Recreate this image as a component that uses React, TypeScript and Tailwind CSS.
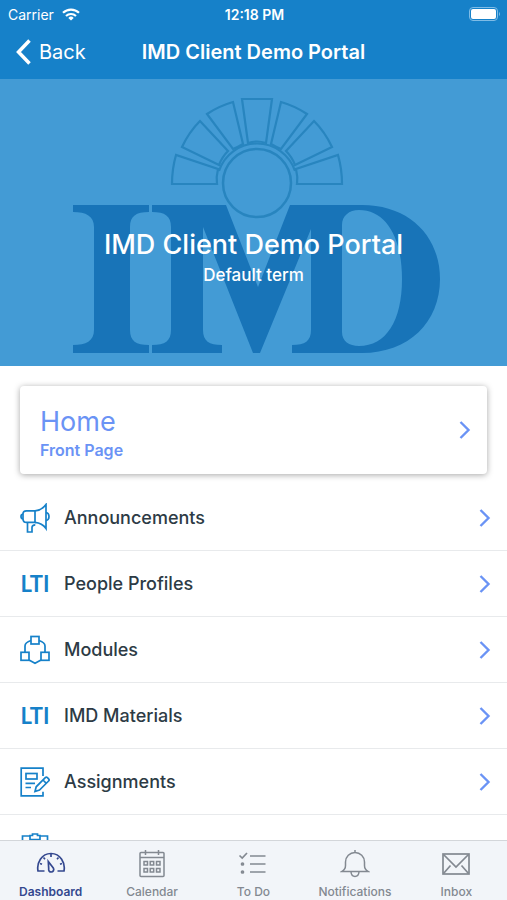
import React from 'react';

interface CourseItem {
  label: string;
  icon: React.ReactNode;
}

interface TabItem {
  label: string;
  icon: React.ReactNode;
  active?: boolean;
}

const iconProps = {
  width: 30,
  height: 30,
  viewBox: '0 0 30 30',
  fill: 'none',
  stroke: 'currentColor',
  strokeWidth: 1.7,
  'aria-hidden': true,
};

const MegaphoneIcon = () => (
  <svg {...iconProps}>
    <path d="M15 7.8H6.5C4.2 7.8 3 9.2 3 11v5c0 2 1.2 3.4 3.5 3.4H15z" />
    <path d="M3 11c-1.400.3-2 1.300-2 2.500s.6 2.200 2 2.500" />
    <path d="M15 7.800c5-.4 8.500-2.800 11-6.300v24c-2.500-3.500-6-5.700-11-6.100" />
    <path d="M26 9.500c2 .3 3 2 3 4s-1 3.700-3 4" />
    <path d="M7.500 19.400V29H12v-4.500c0-1.800 1.200-2.700 3.300-2.700" />
  </svg>
);

const ModulesIcon = () => (
  <svg {...iconProps}>
    <rect x="11" y="1.500" width="8" height="7.500" />
    <rect x="1" y="17.300" width="8" height="8" />
    <rect x="21" y="17.300" width="8" height="8" />
    <path d="M11 5.500C8 6.500 5 8.500 5 11v6M19 5.500c3 1 6 3 6 5.500v6M9 25l6 3.200 6-3.200" />
  </svg>
);

const AssignmentIcon = () => (
  <svg {...iconProps}>
    <path d="M23 9V1.200H1.200v27.600H23v-4" />
    <rect x="6" y="6.500" width="11" height="5.500" />
    <path d="M5.500 16.300H15M5.500 20.500H11" />
    <path d="M15 24.500l1.200-4.700L25.300 10.700a1.500 1.500 0 0 1 2.100 0l1.200 1.200a1.500 1.500 0 0 1 0 2.100L19.500 23zM23 13l3.300 3.300" />
  </svg>
);

const ClipboardIcon = () => (
  <svg {...iconProps}>
    <path d="M10 3H2.500v26h25V3H20" />
    <path d="M10 6.500v-4h2.500V1h5v1.500H20v4z" />
  </svg>
);

const LtiIcon = () => (
  <span className="font-[Lato,sans-serif] text-[22px] leading-7 font-bold">LTI</span>
);

const DashboardIcon = () => (
  <svg {...iconProps}>
    <path d="M8.500 22H2C.5 14 5.500 4.500 15 4.500S29.500 14 28 22h-6.500" />
    <path d="M12.300 12.500l5 6.500c1.200 2-.2 4-2 4s-3-1.200-2.600-3.500z" />
    <path d="M15 5v3M7.500 8.500l1.500 1.700M22.500 8.500L21 10.200M4 14.500l2 .8M26 14.500l-2 .8" />
  </svg>
);

const CalendarIcon = () => (
  <svg {...iconProps} strokeWidth={1.5}>
    <rect x="3" y="3.500" width="24" height="24" rx="1" />
    <path d="M3 8.500h24M8.500 1v5M21.500 1v5" />
    <path d="M7 12.500h3.500V16H7zM13.200 12.500h3.500V16h-3.500zM19.500 12.500H23V16h-3.500zM7 19.500h3.500V23H7zM13.200 19.500h3.500V23h-3.500zM19.500 19.500H23V23h-3.500z" />
  </svg>
);

const TodoIcon = () => (
  <svg {...iconProps}>
    <path d="M12 7h15.500M12 15h15.500M12 23h15.500" />
    <path d="M1.500 6.500L4.200 9 9 4" />
    <circle cx="4.500" cy="15" r="1" />
    <circle cx="4.500" cy="23" r="1" />
  </svg>
);

const BellIcon = () => (
  <svg {...iconProps} strokeWidth={1.5}>
    <path d="M2 22.500h26c-2.500-1.500-3.500-3-3.500-6V13a9.500 9.500 0 0 0-19 0v3.500c0 3-1 4.500-3.500 6zM15 3.500V1M11 23c.3 2.800 1.800 4.500 4 4.500s3.700-1.700 4-4.500" />
  </svg>
);

const MailIcon = () => (
  <svg {...iconProps}>
    <rect x="2" y="5" width="26" height="20" />
    <path d="M2.500 5.500L15 18 27.500 5.500M2.500 24.500l7-8M27.500 24.500l-7-8" />
  </svg>
);

const Chevron = () => (
  <svg width="12" height="20" viewBox="0 0 12 20" fill="none" stroke="currentColor" strokeWidth="2.400" aria-hidden="true">
    <path d="M1.500 2l8 8-8 8" />
  </svg>
);

const BannerLogo = () => (
  <svg viewBox="0 0 370 260" className="w-[370px]" aria-hidden="true">
    <g fill="#1874b8">
      <path d="M1 110h76v7c-13 0-19 4-19 15v103c0 11 6 15 19 15v8H1v-8c13 0 21-4 21-15V132c0-11-8-15-21-15z" />
      <path d="M80 110h74l32 82 32-82h72c47 0 78 31 78 74s-31 74-78 74h-70v-8c13 0 19-4 19-15V134l-51 124h-7L131 132v103c0 11 6 15 19 15v8H80v-8c13 0 19-4 19-15V132c0-11-6-15-19-15zM270 130v107c0 9 7 14 17 14 27 0 43-25 43-67s-16-69-43-69c-10 0-17 6-17 15z" fillRule="evenodd" />
    </g>
    <circle cx="185" cy="88" r="34" fill="#439bd5" stroke="#2885bf" strokeWidth="2.500" />
    <g fill="none" stroke="#2885bf" strokeWidth="2.200">
      <path d="M100 89Q100 74 104 60L146 74Q144 82 145 89z" />
      <path d="M110 52Q117 37 128 26L156 56Q150 62 147 70z" />
      <path d="M135 19Q147 11 161 7L171 49Q166 52 161 54z" />
      <path d="M170 4h30l-6 44q-9-3-18 0z" />
      <path d="M235 19Q223 11 209 7L199 49Q204 52 209 54z" />
      <path d="M260 52Q253 37 242 26L214 56Q220 62 223 70z" />
      <path d="M270 89Q270 74 266 60L224 74Q226 82 225 89z" />
      <path d="M147 76A40 40 0 0 1 223 76" />
    </g>
  </svg>
);

const courseItems: CourseItem[] = [
  { label: 'Announcements', icon: <MegaphoneIcon /> },
  { label: 'People Profiles', icon: <LtiIcon /> },
  { label: 'Modules', icon: <ModulesIcon /> },
  { label: 'IMD Materials', icon: <LtiIcon /> },
  { label: 'Assignments', icon: <AssignmentIcon /> },
];

const tabs: TabItem[] = [
  { label: 'Dashboard', icon: <DashboardIcon />, active: true },
  { label: 'Calendar', icon: <CalendarIcon /> },
  { label: 'To Do', icon: <TodoIcon /> },
  { label: 'Notifications', icon: <BellIcon /> },
  { label: 'Inbox', icon: <MailIcon /> },
];

const StatusBar = () => (
  <div className="grid grid-cols-[1fr_auto_1fr] items-center h-7 pl-2 pr-1.5 text-[14px]">
    <div className="flex items-center gap-2">
      <span>Carrier</span>
      <svg width="18" height="13" viewBox="0 0 18 13" fill="none" stroke="currentColor" strokeWidth="2.200" aria-hidden="true">
        <path d="M1 4.800a11.500 11.500 0 0 1 16 0M4 8a7.200 7.200 0 0 1 10 0" />
        <path d="M9 12.500L6.300 9.900a3.900 3.900 0 0 1 5.400 0z" fill="currentColor" stroke="none" />
      </svg>
    </div>
    <span className="text-center font-semibold">12:18 PM</span>
    <svg className="justify-self-end" width="32" height="14" viewBox="0 0 32 14" aria-hidden="true">
      <rect x=".5" y=".5" width="28" height="13" rx="3.500" fill="none" stroke="#7fbce6" />
      <rect x="2" y="2" width="25" height="10" rx="2" fill="white" />
      <path d="M30 5v4c1.300-.5 1.300-3.500 0-4z" fill="#7fbce6" />
    </svg>
  </div>
);

const App: React.FC = () => {
  return (
    <div className="flex flex-col h-screen bg-white text-[#2d3b45] font-[Inter,'Liberation_Sans',sans-serif]">
      <header className="shrink-0 bg-[#1681c9] text-white">
        <StatusBar />
        <div className="grid grid-cols-[1fr_auto_1fr] items-center h-[51px] px-4 pb-1">
          <button className="flex items-center gap-2 text-[20px]">
            <svg width="15" height="26" viewBox="0 0 15 26" fill="none" stroke="currentColor" strokeWidth="3.500" aria-hidden="true">
              <path d="M13.500 1.500L2.500 13l11 11.500" />
            </svg>
            Back
          </button>
          <h1 className="text-[20px] font-semibold">IMD Client Demo Portal</h1>
        </div>
      </header>

      <main className="flex-1 min-h-0 overflow-y-auto [scrollbar-width:none]">
        <section className="grid justify-items-center overflow-hidden h-[287px] bg-[#439bd5] text-white">
          <div className="col-start-1 row-start-1 pt-4 pl-1.5">
            <BannerLogo />
          </div>
          <div className="col-start-1 row-start-1 pt-[148px] text-center">
            <h2 className="text-[27px] leading-9 font-medium">IMD Client Demo Portal</h2>
            <p className="text-[17px] leading-6 font-medium">Default term</p>
          </div>
        </section>

        <a
          href="#home"
          className="flex items-center justify-between h-[88px] mx-5 mt-5 mb-[11px] pl-5 pr-4 rounded bg-white text-[#6a93f5] shadow-[0_1px_6px_rgba(0,0,0,0.35)]"
        >
          <span className="flex flex-col pt-2">
            <span className="text-[27px] leading-8">Home</span>
            <span className="text-[16px] leading-6 font-semibold">Front Page</span>
          </span>
          <Chevron />
        </a>

        <nav aria-label="Course">
          {courseItems.map((item) => (
            <a
              key={item.label}
              href="#item"
              className="flex items-center h-[66px] pl-5 pr-4 border-b border-[#e8eaec]"
            >
              <span className="flex justify-center w-[30px] mr-[14px] text-[#1681c9]">{item.icon}</span>
              <span className="flex-1 text-[18px] font-medium">{item.label}</span>
              <span className="text-[#6a93f5]">
                <Chevron />
              </span>
            </a>
          ))}
          <a href="#quizzes" aria-label="Quizzes" className="flex items-center h-[66px] px-5 text-[#1681c9]">
            <ClipboardIcon />
          </a>
        </nav>
      </main>

      <nav aria-label="Main" className="grid grid-cols-5 shrink-0 h-[60px] border-t border-[#d3d6da] bg-[#f2f5f9]">
        {tabs.map((tab) => (
          <a
            key={tab.label}
            href="#tab"
            className={`flex flex-col items-center pt-2 text-[12px] leading-[26px] ${
              tab.active ? 'text-[#34488f] font-semibold' : 'text-[#838991] font-medium'
            }`}
          >
            {tab.icon}
            {tab.label}
          </a>
        ))}
      </nav>
    </div>
  );
};

export default App;
